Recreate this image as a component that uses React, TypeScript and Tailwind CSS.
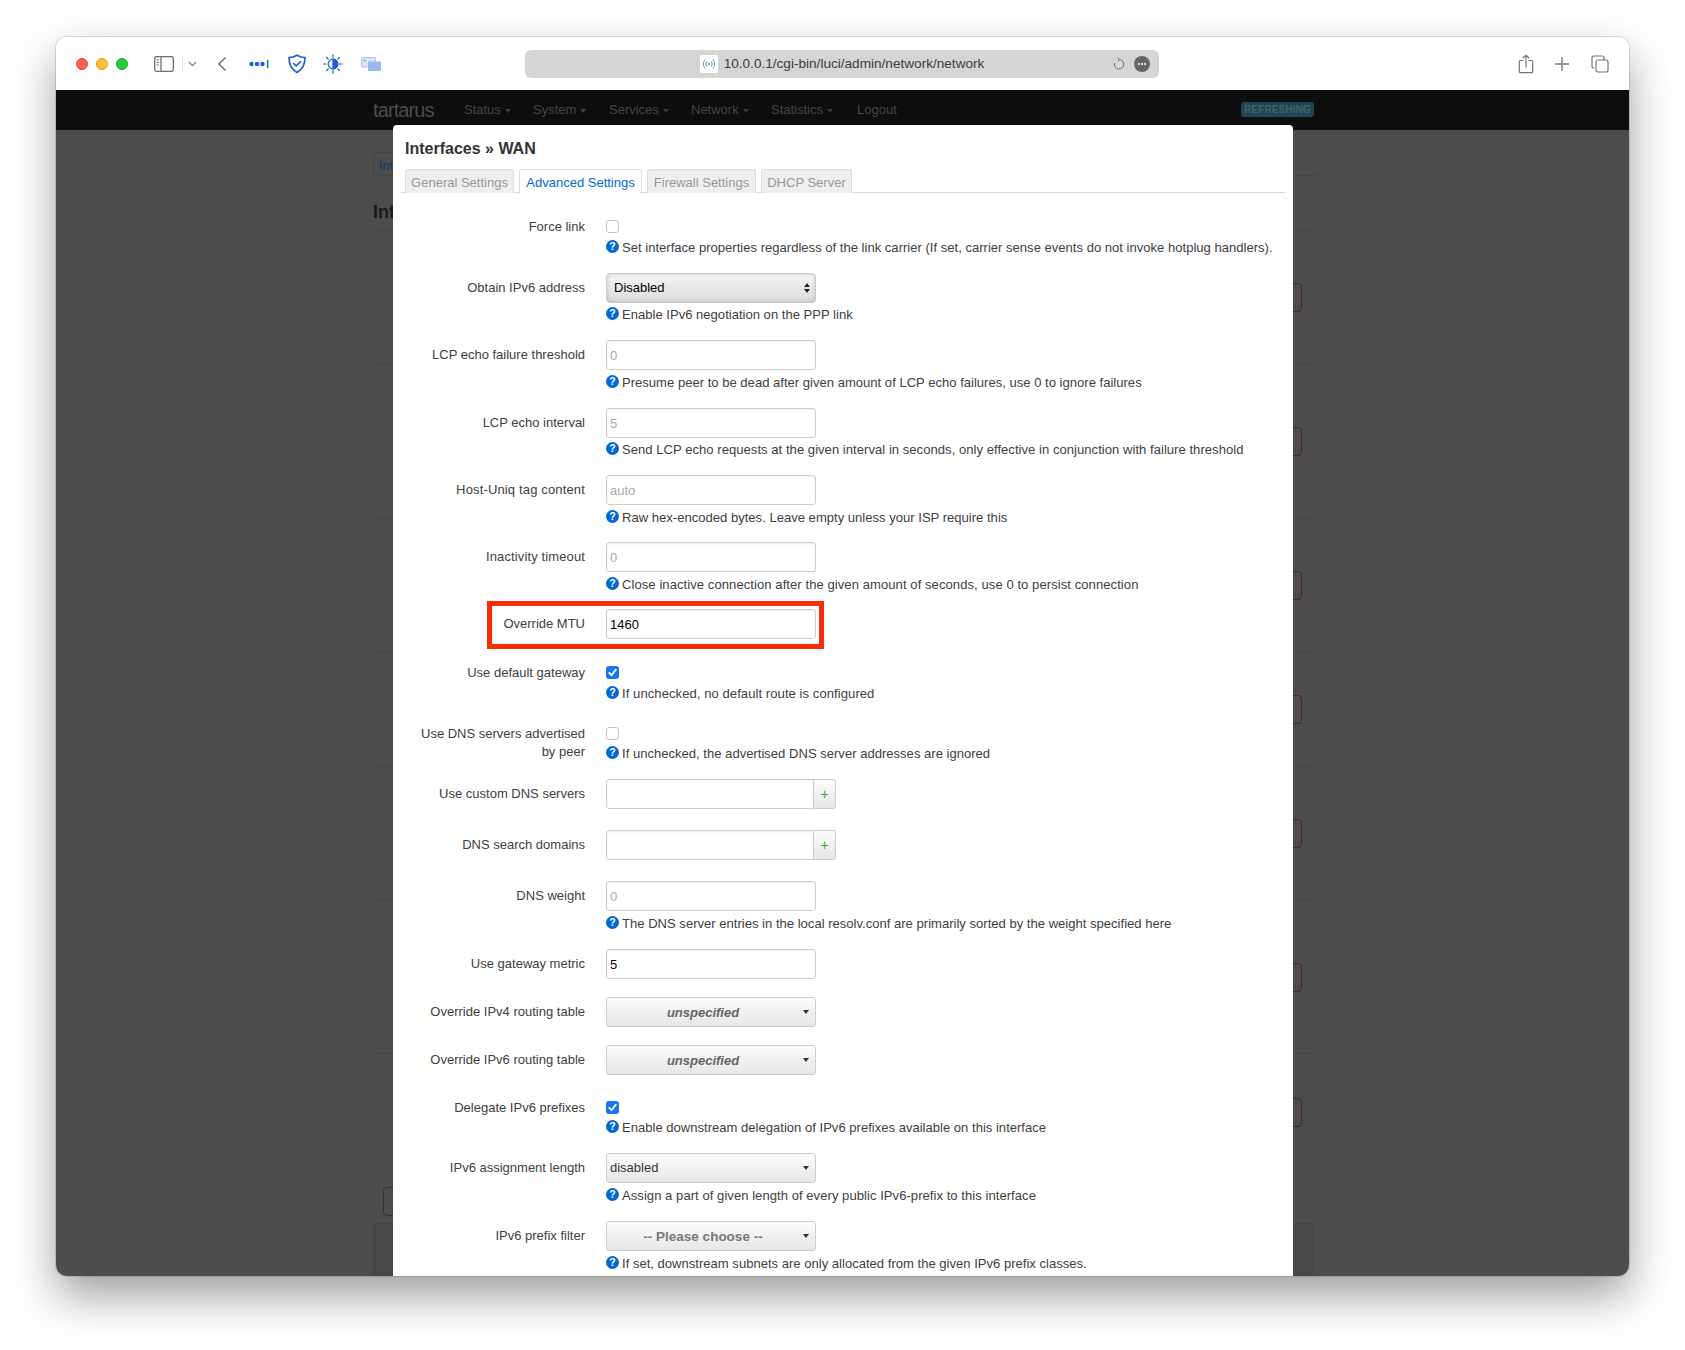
import React from "react";

const F = { fontFamily: '"Liberation Sans", Arial, sans-serif' };

function Help({ m = "mt-px", t = "", children }: { m?: string; t?: string; children: React.ReactNode }) {
  return (
    <div className={`${m} flex h-[22px] items-center text-[13.07px] leading-[22px] text-[#404040] whitespace-nowrap`}>
      <svg width="13" height="13" viewBox="0 0 13 13" className="mr-[3px] -mt-[3px] shrink-0">
        <circle cx="6.5" cy="6.5" r="6.5" fill="#0069d6" />
        <text x="6.5" y="10.2" textAnchor="middle" fontSize="10.5" fontWeight="700" fill="#fff" fontFamily="Liberation Sans">?</text>
      </svg>
      <span className={t}>{children}</span>
    </div>
  );
}

function Row({ h, label, tall, t = "", children }: { h: string; label: React.ReactNode; tall?: boolean; t?: string; children: React.ReactNode }) {
  return (
    <div className={`flex ${h}`}>
      <div className={tall ? "w-[184px] text-right text-[13px] leading-[30px] text-[#404040] whitespace-nowrap" : "w-[184px] text-right text-[13px] leading-[18px] pt-[2px] text-[#404040] whitespace-nowrap"}>
        <span className={t}>{label}</span>
      </div>
      <div className="ml-[21px]">{children}</div>
    </div>
  );
}

function Check({ on }: { on?: boolean }) {
  return (
    <div className="flex h-5 items-center">
      {on ? (
        <div className="flex h-[13px] w-[13px] items-center justify-center rounded-[3px] bg-[#1677ee]">
          <svg width="11" height="11" viewBox="0 0 11 11" fill="none" stroke="#fff" strokeWidth="1.8" strokeLinecap="round" strokeLinejoin="round">
            <path d="M2.3 5.8 4.5 8.2 8.8 2.6" />
          </svg>
        </div>
      ) : (
        <div className="h-[13px] w-[13px] rounded-[3px] border border-[#c4c4c4] bg-white" />
      )}
    </div>
  );
}

function Input({ value, placeholder }: { value?: string; placeholder?: string }) {
  return (
    <div className="h-[30px] w-[210px] rounded-[3px] border border-[#ccc] bg-white px-[3px] text-[13px] leading-[29px] shadow-[inset_0_1px_2px_rgba(0,0,0,0.08)]">
      {value ? <span className="text-black">{value}</span> : <span className="text-[#a8a8a8]">{placeholder}</span>}
    </div>
  );
}

function Caret() {
  return <div className="absolute right-[6px] top-[12px] h-0 w-0 border-x-[3.5px] border-t-[4px] border-x-transparent border-t-[#333]" />;
}

function DropBox({ children }: { children: React.ReactNode }) {
  return (
    <div className="relative h-[30px] w-[210px] rounded-[3px] border border-[#ccc] bg-gradient-to-b from-[#fcfcfc] to-[#e6e6e6] text-[13px] leading-[29px]">
      {children}
      <Caret />
    </div>
  );
}

function DynList() {
  return (
    <div className="flex h-[30px] w-[230px]">
      <div className="h-[30px] w-[208px] rounded-l-[3px] border border-[#ccc] bg-white shadow-[inset_0_1px_2px_rgba(0,0,0,0.08)]" />
      <div className="flex h-[30px] w-[22px] items-center justify-center rounded-r-[3px] border border-l-0 border-[#ccc] bg-gradient-to-b from-[#fcfcfc] to-[#e6e6e6] text-[14px] text-[#3ca53c]">+</div>
    </div>
  );
}

function BgRow({ h }: { h: string }) {
  return (
    <div className={`flex items-center justify-end border-b border-[#454545] pr-[11px] ${h}`}>
      <div className="h-[29px] w-[60px] rounded-[4px] border border-[#5a1f1f]" />
    </div>
  );
}

const Tab = ({ w, active, children }: { w: string; active?: boolean; children: React.ReactNode }) => (
  <div
    className={
      active
        ? `-mb-px h-[25px] ${w} rounded-t-[3px] border border-b-0 border-[#ddd] bg-white text-center text-[13px] leading-[25px] text-[#0069d6]`
        : `h-[24px] ${w} rounded-t-[3px] border border-b-0 border-[#ddd] bg-[#eee] text-center text-[13px] leading-[25px] text-[#999]`
    }
  >
    {children}
  </div>
);

const NavItem = ({ w, caret = true, children }: { w: string; caret?: boolean; children: React.ReactNode }) => (
  <div className={`flex items-center ${w}`}>
    <span>{children}</span>
    {caret && <span className="ml-[4px] mt-[1px] h-0 w-0 border-x-[3.5px] border-t-[4px] border-x-transparent border-t-[#3d3d3d]" />}
  </div>
);

export default function App() {
  return (
    <div style={F} className="h-[1350px] w-[1685px] overflow-hidden bg-white pl-[56px] pt-[37px]">
      <div className="h-[1239px] w-[1573px] overflow-hidden rounded-[11px] shadow-[0_0_0_1px_rgba(0,0,0,0.13),0_20px_45px_rgba(0,0,0,0.38)]">
        {/* toolbar */}
        <div className="flex h-[53px] items-center bg-white pt-px">
          <div className="ml-[20px] flex gap-2">
            <span className="h-3 w-3 rounded-full border border-[#e0443e] bg-[#ff5f57]" />
            <span className="h-3 w-3 rounded-full border border-[#dfa023] bg-[#febc2e]" />
            <span className="h-3 w-3 rounded-full border border-[#1aab29] bg-[#28c840]" />
          </div>
          <svg width="20" height="16" viewBox="0 0 20 16" className="ml-[26px]" fill="none" stroke="#6e6e6e" strokeWidth="1.3">
            <rect x=".7" y=".7" width="18.6" height="14.6" rx="2" />
            <path d="M7 .7v14.6" />
            <path d="M2.5 4h2.5M2.5 6.5h2.5M2.5 9h2.5" strokeWidth="1.2" />
          </svg>
          <div className="ml-[8px] h-[18px] w-px bg-[#e3e3e3]" />
          <svg width="9" height="6" viewBox="0 0 9 6" className="ml-[5px]" fill="none" stroke="#8a8a8a" strokeWidth="1.4"><path d="M1 1l3.5 3.5L8 1" /></svg>
          <svg width="10" height="16" viewBox="0 0 10 16" className="ml-[20px]" fill="none" stroke="#6a6a6a" strokeWidth="1.5"><path d="M8.5 1.5 1.8 8l6.7 6.5" /></svg>
          <svg width="20" height="8" viewBox="0 0 20 8" className="ml-[22px]" fill="#1f5fd0"><circle cx="2.5" cy="4" r="2.2" /><circle cx="8" cy="4" r="2.2" /><circle cx="13.5" cy="4" r="2.2" /><rect x="18" y="0" width="1.4" height="8" /></svg>
          <svg width="20" height="20" viewBox="0 0 20 20" className="ml-[18px]" fill="none" stroke="#1f5fd0" strokeWidth="1.7" strokeLinejoin="round" strokeLinecap="round">
            <path d="M10 1.2c2.8 1.7 5.3 2.3 8 2.4 0 6.8-2.3 11.7-8 15-5.7-3.3-8-8.2-8-15 2.7-.1 5.2-.7 8-2.4Z" />
            <path d="M6.7 9.6 9.2 12l4.2-4.3" />
          </svg>
          <svg width="20" height="20" viewBox="0 0 20 20" className="ml-[16px]" fill="none" stroke="#1f5fd0" strokeWidth="1.2" strokeLinecap="round">
            <circle cx="10" cy="10" r="4.8" />
            <path d="M10 5.2a4.8 4.8 0 0 1 0 9.6Z" fill="#1f5fd0" />
            <path d="M10 .8v2.4M10 16.8v2.4M.8 10h2.4M16.8 10h2.4M3.5 3.5l1.7 1.7M14.8 14.8l1.7 1.7M3.5 16.5l1.7-1.7M14.8 5.2l1.7-1.7" />
          </svg>
          <svg width="20" height="14" viewBox="0 0 20 14" className="ml-[18px]">
            <rect x=".5" y=".5" width="14" height="9.5" rx="1" fill="#dbe5f8" stroke="#a9c0ee" />
            <rect x="2.5" y="2.5" width="2.5" height="2" fill="#8daae6" />
            <rect x="7" y="4.5" width="13" height="9.5" rx="1" fill="#9db8ec" />
          </svg>
          <div className="relative ml-[144px] flex h-[28px] w-[634px] items-center justify-center rounded-[6px] bg-[#d5d5d5] text-[13.6px] text-[#3c3c3c]">
            <div className="flex items-center">
              <div className="mr-[6px] flex h-[18px] w-[18px] items-center justify-center rounded-[2px] bg-white">
                <svg width="14" height="10" viewBox="0 0 14 10" fill="none" stroke="#5b9bb0" strokeWidth="1" strokeLinecap="round">
                  <circle cx="7" cy="5" r="1" fill="#5b9bb0" stroke="none" />
                  <path d="M4.6 2.6a3.4 3.4 0 0 0 0 4.8M9.4 2.6a3.4 3.4 0 0 1 0 4.8M2.8 1a6 6 0 0 0 0 8M11.2 1a6 6 0 0 1 0 8" />
                </svg>
              </div>
              <span>10.0.0.1/cgi-bin/luci/admin/network/network</span>
            </div>
            <svg width="12" height="14" viewBox="0 0 12 14" className="absolute right-[34px] top-[7px]" fill="none" stroke="#6e6e6e" strokeWidth="1"><path d="M6 2.5a4.7 4.7 0 1 1-4.5 3.6" /><path d="M4.5.8 6.6 2.5 4.6 4.3" /></svg>
            <div className="absolute right-[9px] top-[6px] flex h-4 w-4 items-center justify-center gap-[1px] rounded-full bg-[#666]">
              <span className="h-[2px] w-[2px] rounded-full bg-white" />
              <span className="h-[2px] w-[2px] rounded-full bg-white" />
              <span className="h-[2px] w-[2px] rounded-full bg-white" />
            </div>
          </div>
          <svg width="16" height="20" viewBox="0 0 16 20" className="ml-[359px]" fill="none" stroke="#757575" strokeWidth="1.2" strokeLinecap="round" strokeLinejoin="round">
            <path d="M5 6.5H2.5A1.2 1.2 0 0 0 1.3 7.7v9.8a1.2 1.2 0 0 0 1.2 1.2h11a1.2 1.2 0 0 0 1.2-1.2V7.7a1.2 1.2 0 0 0-1.2-1.2H11" />
            <path d="M8 13V1.2M5.2 3.8 8 1.2l2.8 2.6" />
          </svg>
          <svg width="14" height="14" viewBox="0 0 14 14" className="ml-[21px]" fill="none" stroke="#757575" strokeWidth="1.3"><path d="M7 0v14M0 7h14" /></svg>
          <svg width="18" height="18" viewBox="0 0 18 18" className="ml-[22px]" fill="none" stroke="#757575" strokeWidth="1.2">
            <path d="M3 13H2.6A1.6 1.6 0 0 1 1 11.4V2.6A1.6 1.6 0 0 1 2.6 1h8.8A1.6 1.6 0 0 1 13 2.6V5" />
            <rect x="5" y="5" width="12" height="12" rx="2" />
          </svg>
        </div>

        {/* page */}
        <div className="relative h-[1186px] bg-[#4d4d4d]">
          <div className="flex h-[40px] items-center bg-[#0d0d0d] pl-[317px] text-[13px] text-[#454545]">
            <div className="w-[91px] text-[20px] tracking-[-0.9px] text-[#4c4c4c]">tartarus</div>
            <NavItem w="w-[69px]">Status</NavItem>
            <NavItem w="w-[76px]">System</NavItem>
            <NavItem w="w-[82px]">Services</NavItem>
            <NavItem w="w-[80px]">Network</NavItem>
            <NavItem w="w-[86px]">Statistics</NavItem>
            <NavItem w="w-[384px]" caret={false}>Logout</NavItem>
            <div className="-mt-[2px] rounded-[3px] bg-[#1f4655] px-[3px] text-[10.2px] font-bold leading-[15px] text-[#46606b]">REFRESHING</div>
          </div>

          {/* dimmed page behind the dialog */}
          <div className="ml-[317px] w-[940px]">
            <div className="-mr-[5px] mt-[22px] h-[24px] border-b border-[#454545]">
              <div className="h-[24px] w-[100px] rounded-t-[3px] border border-b-0 border-[#454545] pl-[5px] text-[13px] leading-[25px] text-[#0e3a63]">Interfaces</div>
            </div>
            <div className="h-[55px] border-b border-[#454545] pt-[22px] text-[18px] font-bold leading-[28px] text-[#1a1a1a]">Interfaces</div>
            <BgRow h="h-[133px]" />
            <BgRow h="h-[155px]" />
            <BgRow h="h-[133px]" />
            <BgRow h="h-[115px]" />
            <BgRow h="h-[134px]" />
            <BgRow h="h-[153px]" />
            <div className="flex h-[170px] justify-between border-b border-[#454545] pr-[11px]">
              <div className="ml-[10px] mt-[133px] h-[29px] w-[60px] rounded-[4px] border border-[#234023]" />
              <div className="mt-[44px] h-[29px] w-[60px] rounded-[4px] border border-[#5a1f1f]" />
            </div>
            <div className="h-[60px] bg-[#474747]" />
          </div>

          {/* dialog */}
          <div className="absolute bottom-0 left-[337px] top-[35px] w-[900px] overflow-hidden rounded-t-[4px] bg-white px-[8px]">
            <div className="h-[44px] pl-[4px] text-[16px] font-bold leading-[47px] text-[#333]">Interfaces » WAN</div>
            <div className="flex h-[24px] gap-[5px] border-b border-[#ddd] pl-[4px]">
              <Tab w="w-[109px]">General Settings</Tab>
              <Tab w="w-[123px]" active>Advanced Settings</Tab>
              <Tab w="w-[109px]">Firewall Settings</Tab>
              <Tab w="w-[91px]">DHCP Server</Tab>
            </div>
            <div className="relative pt-[23px]">
              <Row h="h-[57px]" label="Force link"><Check /><Help>Set interface properties regardless of the link carrier (If set, carrier sense events do not invoke hotplug handlers).</Help></Row>
              <Row h="h-[67px]" tall label="Obtain IPv6 address">
                <div className="relative h-[30px] w-[210px] rounded-[4px] border border-[#c8c8c8] bg-gradient-to-b from-[#f6f6f6] to-[#dcdcdc] pl-[7px] text-[13px] leading-[28px] text-black shadow-[inset_0_0_4px_rgba(0,0,0,0.18)]">
                  Disabled
                  <div className="absolute right-[5px] top-[9px] h-0 w-0 border-x-[3px] border-b-[4px] border-x-transparent border-b-[#222]" />
                  <div className="absolute right-[5px] top-[15px] h-0 w-0 border-x-[3px] border-t-[4px] border-x-transparent border-t-[#222]" />
                </div>
                <Help>Enable IPv6 negotiation on the PPP link</Help>
              </Row>
              <Row h="h-[68px]" tall label="LCP echo failure threshold"><Input placeholder="0" /><Help m="mt-[2px]">Presume peer to be dead after given amount of LCP echo failures, use 0 to ignore failures</Help></Row>
              <Row h="h-[67px]" tall label="LCP echo interval"><Input placeholder="5" /><Help m="mt-px" t="tracking-[0.03px]">Send LCP echo requests at the given interval in seconds, only effective in conjunction with failure threshold</Help></Row>
              <Row h="h-[67px]" tall t="tracking-[0.15px]" label="Host-Uniq tag content"><Input placeholder="auto" /><Help m="mt-[2px]">Raw hex-encoded bytes. Leave empty unless your ISP require this</Help></Row>
              <Row h="h-[67px]" tall t="tracking-[0.12px]" label="Inactivity timeout"><Input placeholder="0" /><Help m="mt-[2px]" t="tracking-[0.06px]">Close inactive connection after the given amount of seconds, use 0 to persist connection</Help></Row>
              <Row h="h-[53px]" tall label="Override MTU"><Input value="1460" /></Row>
              <Row h="h-[61px]" label="Use default gateway"><Check on /><Help t="tracking-[0.06px]">If unchecked, no default route is configured</Help></Row>
              <Row h="h-[56px]" label={<>Use DNS servers advertised<br />by peer</>}><Check /><Help m="mt-0">If unchecked, the advertised DNS server addresses are ignored</Help></Row>
              <Row h="h-[51px]" tall label="Use custom DNS servers"><DynList /></Row>
              <Row h="h-[51px]" tall label="DNS search domains"><DynList /></Row>
              <Row h="h-[68px]" tall label="DNS weight"><Input placeholder="0" /><Help m="mt-[2px]">The DNS server entries in the local resolv.conf are primarily sorted by the weight specified here</Help></Row>
              <Row h="h-[48px]" tall label="Use gateway metric"><Input value="5" /></Row>
              <Row h="h-[48px]" tall label="Override IPv4 routing table">
                <DropBox><div className="pr-[16px] text-center font-bold italic text-[#666]">unspecified</div></DropBox>
              </Row>
              <Row h="h-[52px]" tall label="Override IPv6 routing table">
                <DropBox><div className="pr-[16px] text-center font-bold italic text-[#666]">unspecified</div></DropBox>
              </Row>
              <Row h="h-[56px]" label="Delegate IPv6 prefixes"><Check on /><Help m="mt-0">Enable downstream delegation of IPv6 prefixes available on this interface</Help></Row>
              <Row h="h-[68px]" tall label="IPv6 assignment length">
                <DropBox><div className="pl-[3px] leading-[27px] text-[#333]">disabled</div></DropBox>
                <Help m="mt-[2px]" t="tracking-[0.04px]">Assign a part of given length of every public IPv6-prefix to this interface</Help>
              </Row>
              <Row h="h-[60px]" tall label="IPv6 prefix filter">
                <DropBox><div className="pr-[16px] text-center text-[13.5px] font-bold text-[#777]">-- Please choose --</div></DropBox>
                <Help m="mt-[2px]">If set, downstream subnets are only allocated from the given IPv6 prefix classes.</Help>
              </Row>
              {/* red annotation box */}
              <div className="absolute left-[86px] top-[408px] h-[48px] w-[337px] border-[5px] border-[#fc2d06]" />
            </div>
          </div>
        </div>
      </div>
    </div>
  );
}
